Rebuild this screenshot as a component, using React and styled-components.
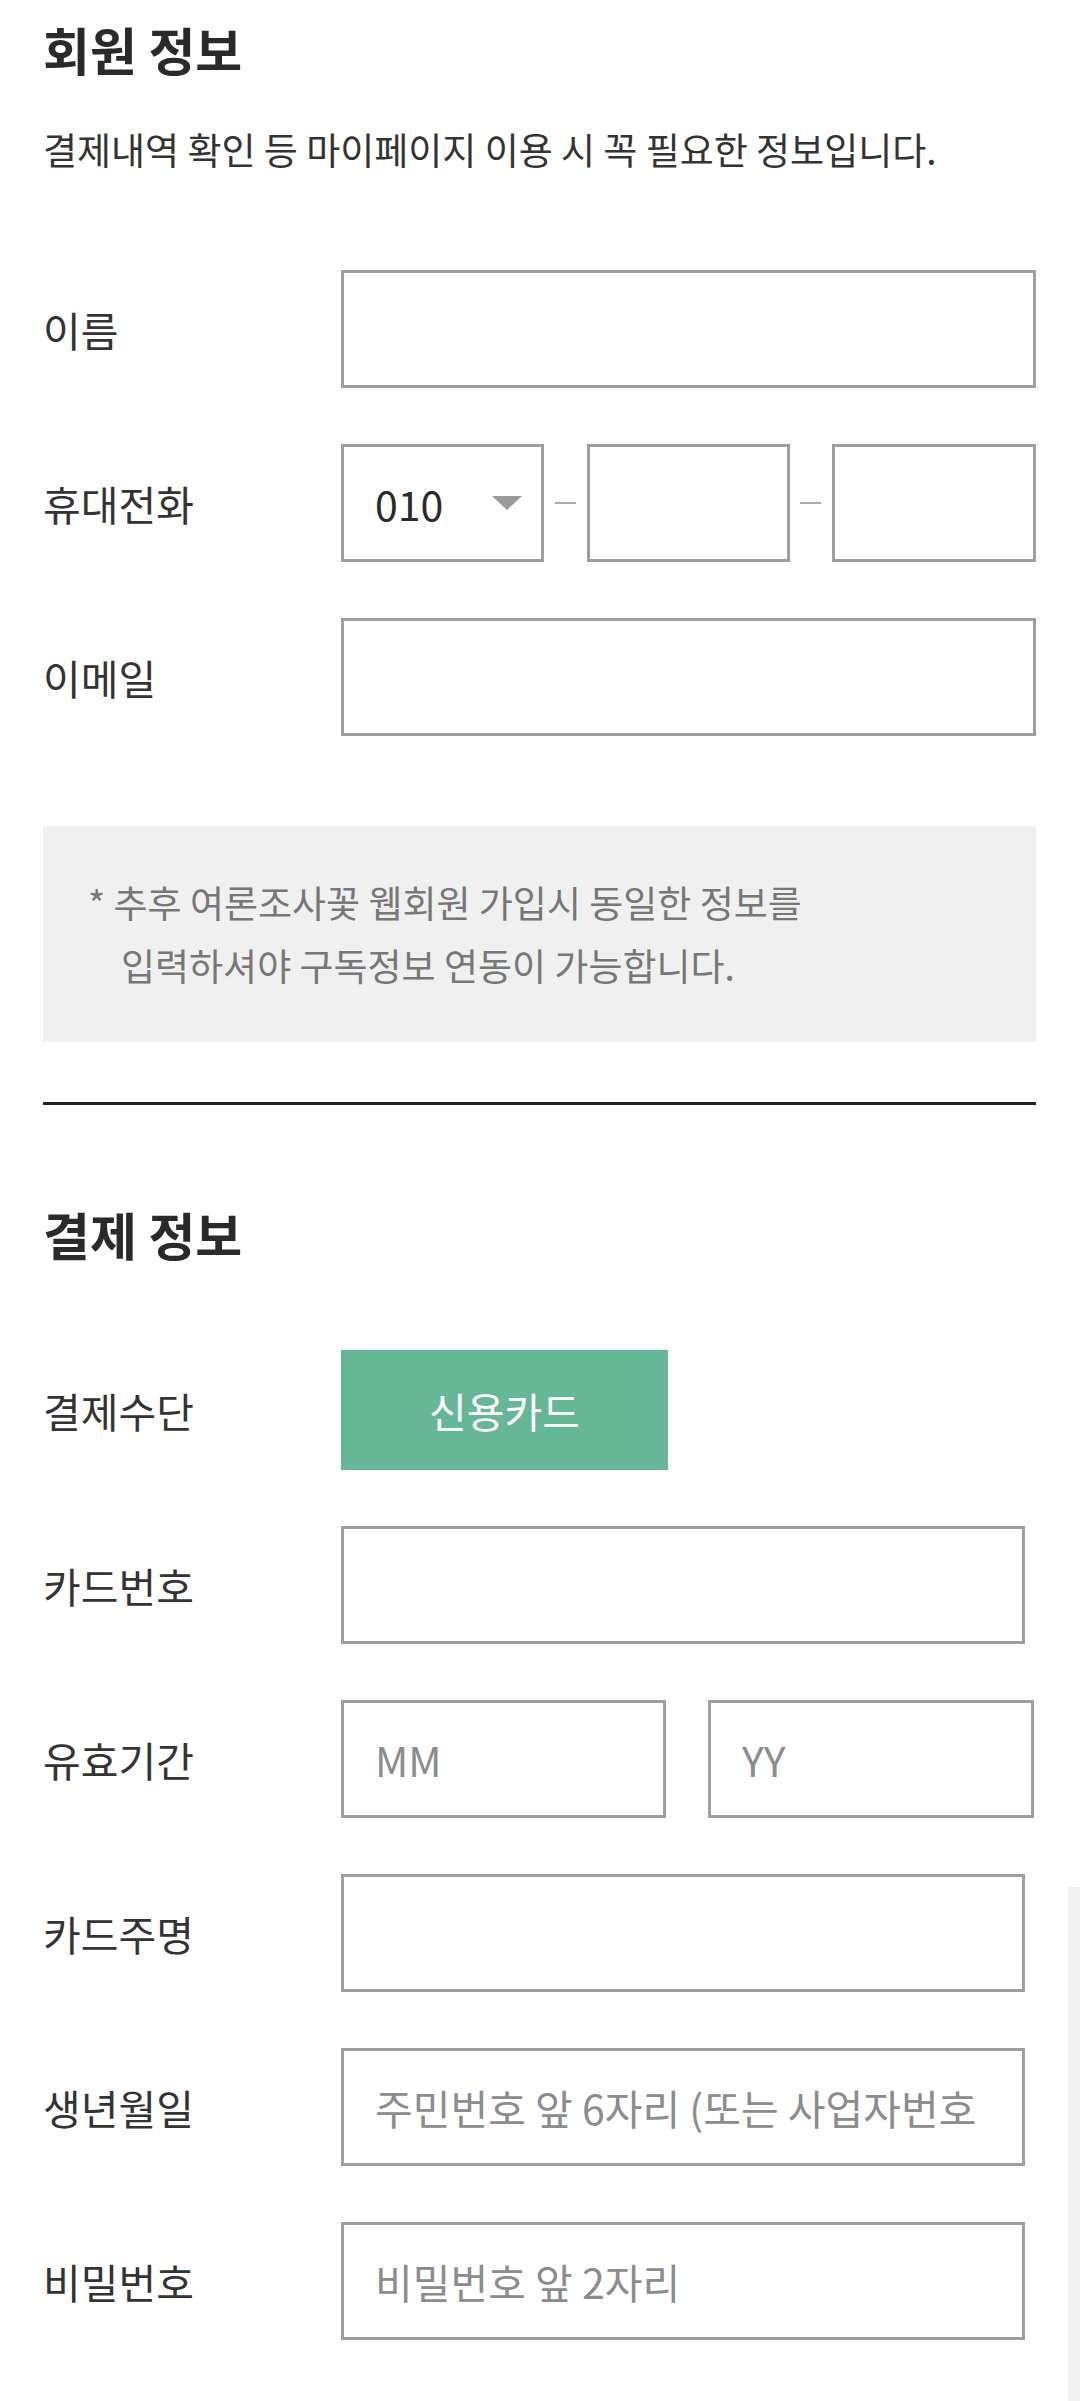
import React from 'react'
import styled, { createGlobalStyle } from 'styled-components'

const GlobalStyle = createGlobalStyle`
  * { box-sizing: border-box; }
  body {
    margin: 0;
    background: #ffffff;
    font-family: "Noto Sans CJK KR", "Noto Sans", sans-serif;
  }
`

const Page = styled.div`
  position: relative;
  min-height: 2401px;
  padding: 20px 44px 60px 43px;
`

const Title = styled.h2`
  margin: ${p => p.$top || 0}px 0 0;
  font-size: 51px;
  line-height: 58px;
  font-weight: 700;
  color: #2a2a2a;
`

const Desc = styled.p`
  margin: 46px 0 0;
  font-size: 37px;
  line-height: 50px;
  color: #333;
`

const FieldList = styled.div`
  display: flex;
  flex-direction: column;
  gap: 56px;
  margin-top: ${p => p.$top}px;
`

const Row = styled.div`
  display: grid;
  grid-template-columns: 298px 1fr;
  align-items: center;
`

const Label = styled.span`
  font-size: 41px;
  line-height: 1;
  color: #333;
`

const TextInput = styled.input`
  display: block;
  width: ${p => (p.$w ? `${p.$w}px` : '100%')};
  height: 118px;
  margin: 0;
  padding: 0 ${p => p.$padR || 22}px 0 31px;
  border: 3px solid #9e9e9e;
  border-radius: 0;
  outline: none;
  background: #fff;
  font-family: inherit;
  font-size: 41px;
  color: #333;

  &::placeholder {
    color: #8c8c8c;
  }
`

const PhoneGroup = styled.div`
  display: flex;
  align-items: center;
  justify-content: space-between;
`

const Select = styled.div`
  width: 203px;
  height: 118px;
  display: flex;
  align-items: center;
  justify-content: space-between;
  padding: 0 19px 0 31px;
  border: 3px solid #9e9e9e;
  font-size: 41px;
  color: #2a2a2a;
`

const Dash = styled.span`
  width: 21px;
  height: 2px;
  background: #aaa;
`

const Notice = styled.div`
  margin-top: 90px;
  padding: 45px 30px 45px 78px;
  background: #f0f0f0;
  font-size: 37px;
  line-height: 63px;
  color: #777;
  text-indent: -33px;
`

const Divider = styled.div`
  margin-top: 60px;
  height: 3px;
  background: #222;
`

const PayButton = styled.button`
  width: 327px;
  height: 120px;
  border: none;
  border-radius: 0;
  background: #66b795;
  color: #fff;
  font-family: inherit;
  font-size: 41px;
`

const Pair = styled.div`
  display: flex;
  gap: 42px;
`

const ScrollTrack = styled.div`
  position: absolute;
  right: 0;
  top: 1887px;
  bottom: 0;
  width: 12px;
  background: #f1f1f1;
`

const Arrow = () => (
  <svg width="30" height="14" viewBox="0 0 30 14">
    <path d="M0 0 H30 L15 14 Z" fill="#9a9a9a" />
  </svg>
)

const App = () => (
  <React.Fragment>
    <GlobalStyle />
    <Page>
      <Title>회원 정보</Title>
      <Desc>결제내역 확인 등 마이페이지 이용 시 꼭 필요한 정보입니다.</Desc>

      <FieldList $top={96}>
        <Row>
          <Label>이름</Label>
          <TextInput />
        </Row>
        <Row>
          <Label>휴대전화</Label>
          <PhoneGroup>
            <Select>
              <span>010</span>
              <Arrow />
            </Select>
            <Dash />
            <TextInput $w={203} />
            <Dash />
            <TextInput $w={204} />
          </PhoneGroup>
        </Row>
        <Row>
          <Label>이메일</Label>
          <TextInput />
        </Row>
      </FieldList>

      <Notice>
        * 추후 여론조사꽃 웹회원 가입시 동일한 정보를
        <br />
        입력하셔야 구독정보 연동이 가능합니다.
      </Notice>

      <Divider />

      <Title $top={100}>결제 정보</Title>

      <FieldList $top={87}>
        <Row>
          <Label>결제수단</Label>
          <div>
            <PayButton type="button">신용카드</PayButton>
          </div>
        </Row>
        <Row>
          <Label>카드번호</Label>
          <TextInput $w={684} />
        </Row>
        <Row>
          <Label>유효기간</Label>
          <Pair>
            <TextInput $w={325} placeholder="MM" />
            <TextInput $w={326} placeholder="YY" />
          </Pair>
        </Row>
        <Row>
          <Label>카드주명</Label>
          <TextInput $w={684} />
        </Row>
        <Row>
          <Label>생년월일</Label>
          <TextInput $w={684} $padR={44} placeholder="주민번호 앞 6자리 (또는 사업자번호 10자리)" />
        </Row>
        <Row>
          <Label>비밀번호</Label>
          <TextInput $w={684} placeholder="비밀번호 앞 2자리" />
        </Row>
      </FieldList>
      <ScrollTrack />
    </Page>
  </React.Fragment>
)

export default App
